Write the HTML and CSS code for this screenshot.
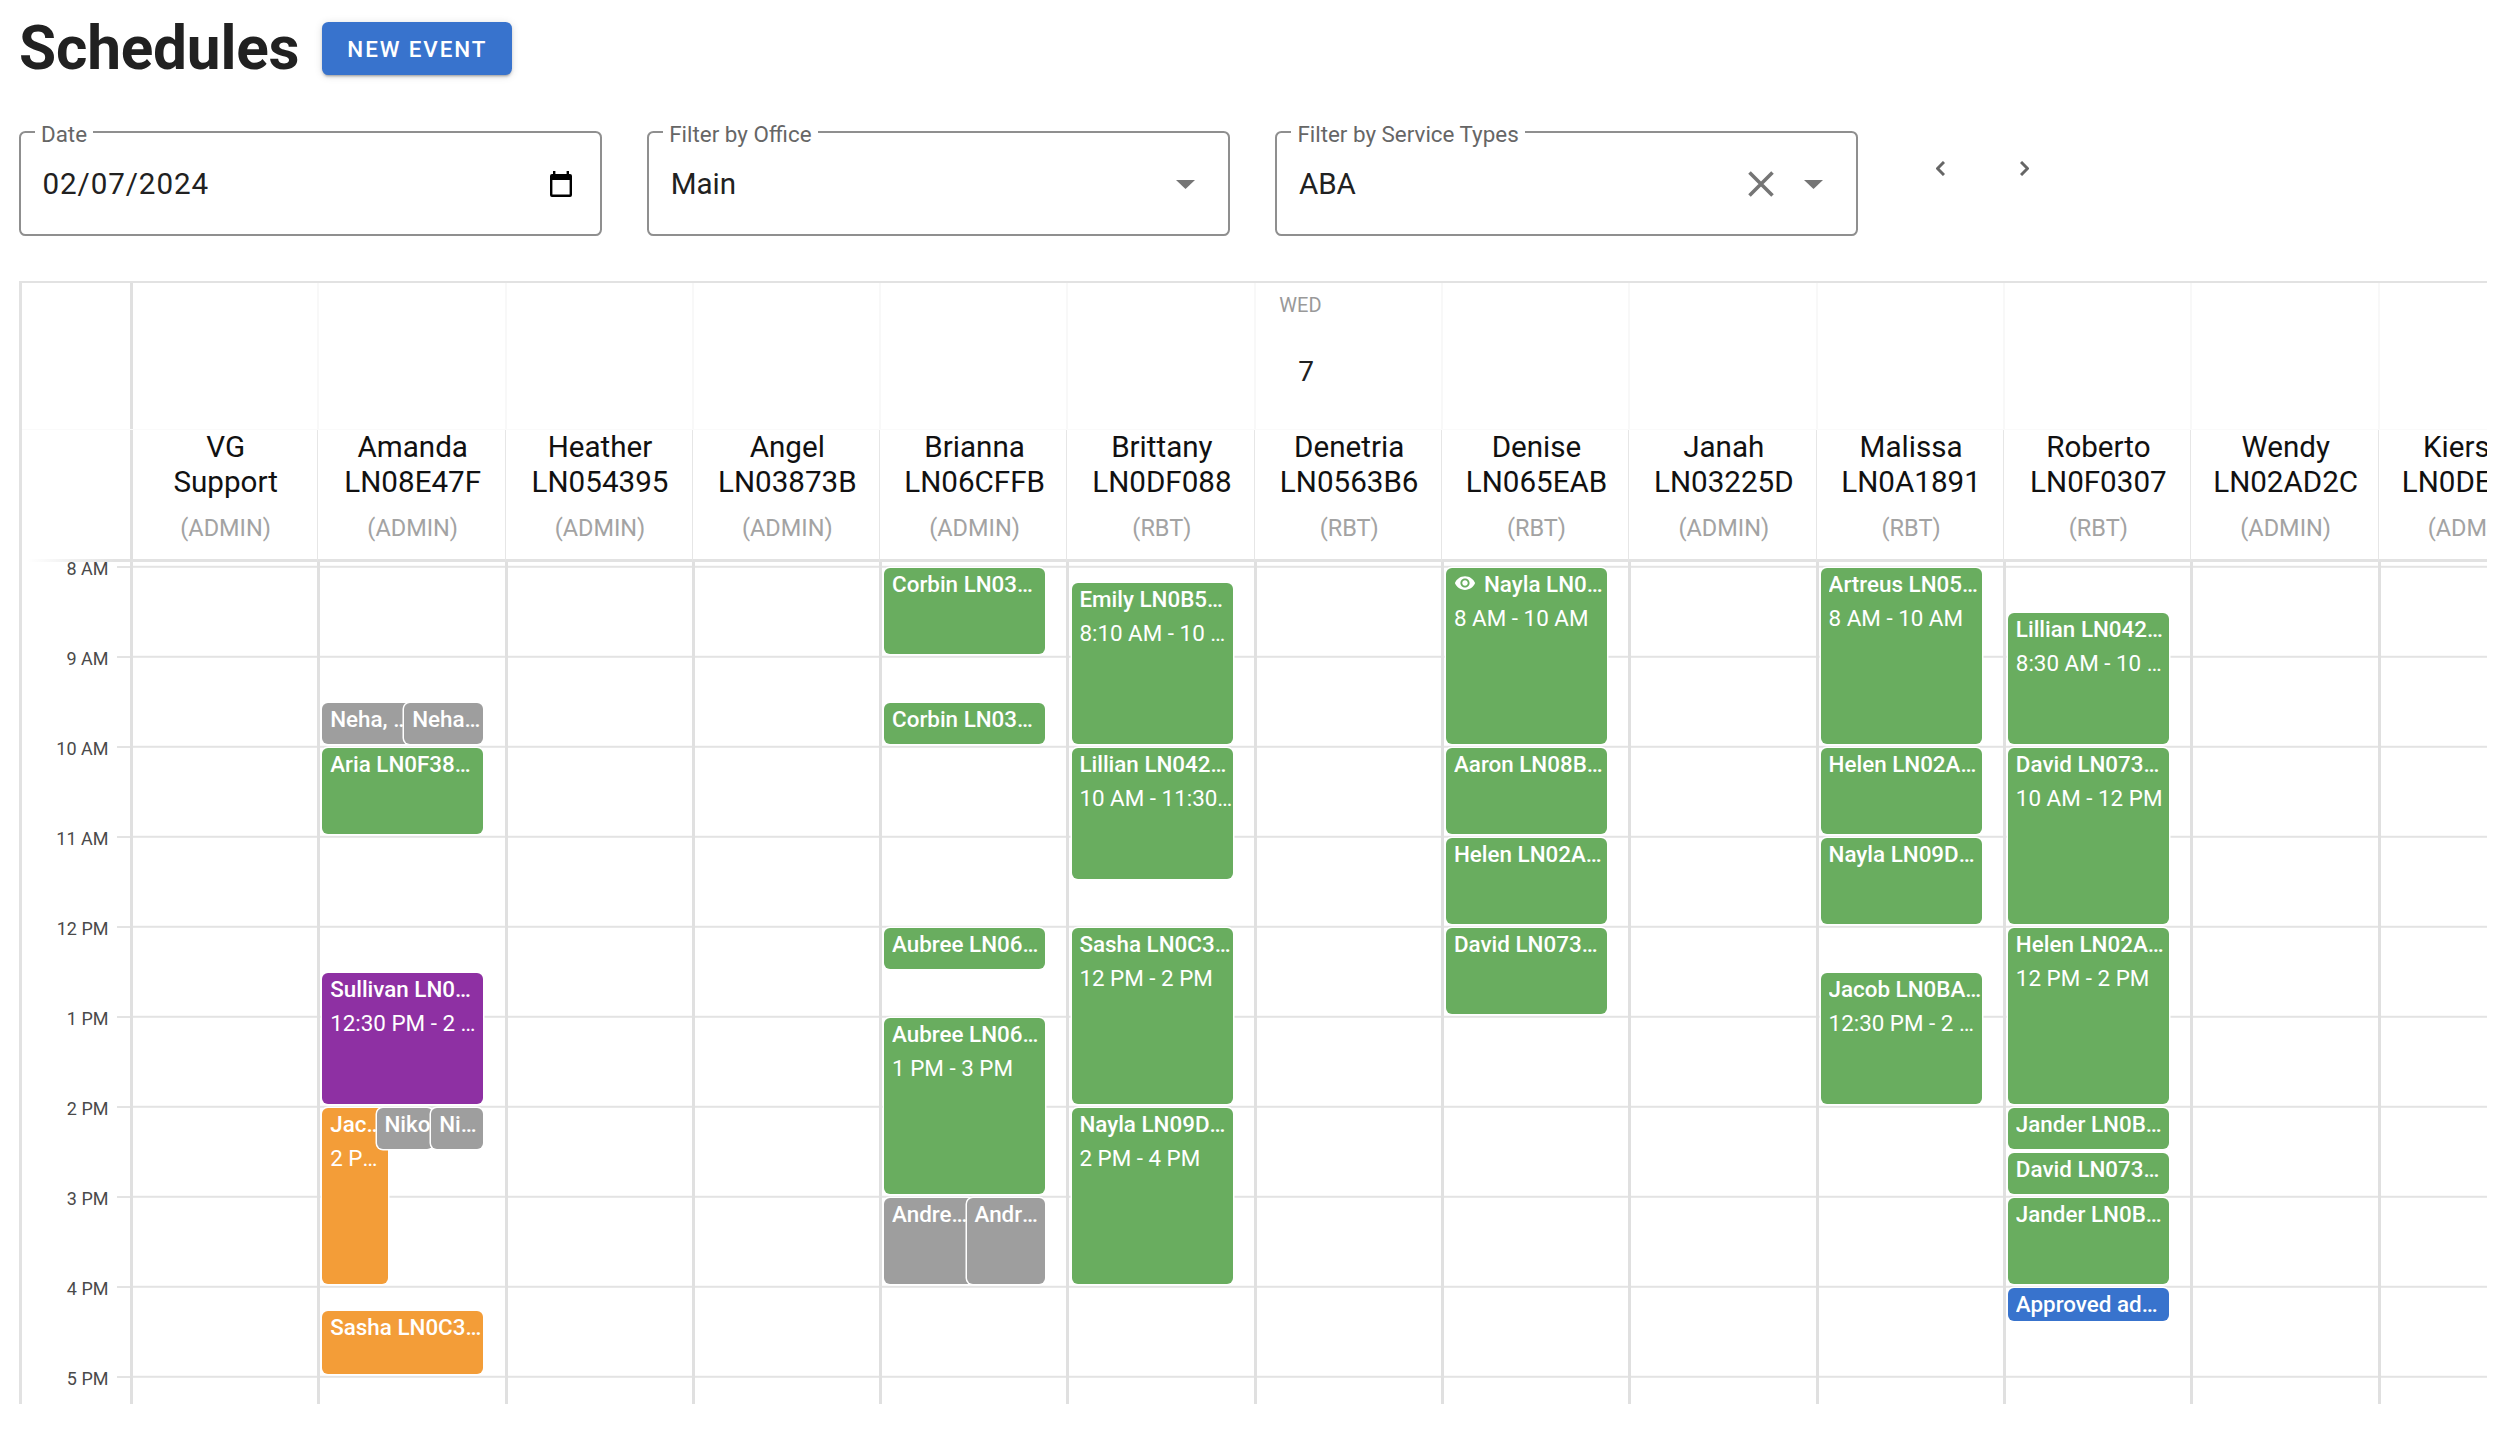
FILE: index.html
```html
<!DOCTYPE html>
<html lang="en">
<head>
<meta charset="utf-8">
<title>Schedules</title>
<link rel="stylesheet" href="styles.css">
</head>
<body>
<main class="page">
  <header class="title-row">
    <h1 class="title">Schedules</h1>
    <button class="new-event">NEW EVENT</button>
  </header>

  <section class="filters">
    <div class="field">
      <span class="field-label">Date</span>
      <span class="field-value field-date">02/07/2024</span>
      <svg class="cal-icon" viewBox="0 0 22 26"><path d="M3 0h2.4v3h11.2V0H19v3h1a2 2 0 0 1 2 2v19a2 2 0 0 1-2 2H2a2 2 0 0 1-2-2V5a2 2 0 0 1 2-2h1zM2.4 9v14.6h17.2V9z"/></svg>
    </div>
    <div class="field">
      <span class="field-label">Filter by Office</span>
      <span class="field-value">Main</span>
      <svg class="arrow-icon" viewBox="0 0 19 9"><path d="M0 0h19L9.5 9z"/></svg>
    </div>
    <div class="field">
      <span class="field-label">Filter by Service Types</span>
      <span class="field-value">ABA</span>
      <svg class="clear-icon" viewBox="0 0 26 26"><path d="M1.5 1.5l23 23M24.5 1.5l-23 23"/></svg>
      <svg class="arrow-icon" viewBox="0 0 19 9"><path d="M0 0h19L9.5 9z"/></svg>
    </div>
    <nav class="pager">
      <svg class="chev" viewBox="0 0 9 15"><path d="M8 1L1.5 7.5 8 14"/></svg>
      <svg class="chev" viewBox="0 0 9 15"><path d="M1 1l6.5 6.5L1 14"/></svg>
    </nav>
  </section>

  <section class="calendar">
    <div class="days">
      <div class="gutter"></div>
      <div class="day"></div><div class="day"></div><div class="day"></div><div class="day"></div><div class="day"></div><div class="day"></div>
      <div class="day day-active"><span class="dow">WED</span><span class="dom">7</span></div>
      <div class="day"></div><div class="day"></div><div class="day"></div><div class="day"></div><div class="day"></div><div class="day"></div>
    </div>

    <div class="names">
      <div class="gutter gutter-names"></div>
      <div class="staff first"><div class="staff-name">VG<br>Support</div><div class="role">(ADMIN)</div></div>
      <div class="staff"><div class="staff-name">Amanda<br>LN08E47F</div><div class="role">(ADMIN)</div></div>
      <div class="staff"><div class="staff-name">Heather<br>LN054395</div><div class="role">(ADMIN)</div></div>
      <div class="staff"><div class="staff-name">Angel<br>LN03873B</div><div class="role">(ADMIN)</div></div>
      <div class="staff"><div class="staff-name">Brianna<br>LN06CFFB</div><div class="role">(ADMIN)</div></div>
      <div class="staff"><div class="staff-name">Brittany<br>LN0DF088</div><div class="role">(RBT)</div></div>
      <div class="staff"><div class="staff-name">Denetria<br>LN0563B6</div><div class="role">(RBT)</div></div>
      <div class="staff"><div class="staff-name">Denise<br>LN065EAB</div><div class="role">(RBT)</div></div>
      <div class="staff"><div class="staff-name">Janah<br>LN03225D</div><div class="role">(ADMIN)</div></div>
      <div class="staff"><div class="staff-name">Malissa<br>LN0A1891</div><div class="role">(RBT)</div></div>
      <div class="staff"><div class="staff-name">Roberto<br>LN0F0307</div><div class="role">(RBT)</div></div>
      <div class="staff"><div class="staff-name">Wendy<br>LN02AD2C</div><div class="role">(ADMIN)</div></div>
      <div class="staff"><div class="staff-name">Kierstin<br>LN0DE1A2</div><div class="role">(ADMIN)</div></div>
    </div>

    <div class="grid-body">
      <div class="times">
        <div class="hour"><span class="hour-label">8 AM</span><i class="tick"></i></div>
        <div class="hour"><span class="hour-label">9 AM</span><i class="tick"></i></div>
        <div class="hour"><span class="hour-label">10 AM</span><i class="tick"></i></div>
        <div class="hour"><span class="hour-label">11 AM</span><i class="tick"></i></div>
        <div class="hour"><span class="hour-label">12 PM</span><i class="tick"></i></div>
        <div class="hour"><span class="hour-label">1 PM</span><i class="tick"></i></div>
        <div class="hour"><span class="hour-label">2 PM</span><i class="tick"></i></div>
        <div class="hour"><span class="hour-label">3 PM</span><i class="tick"></i></div>
        <div class="hour"><span class="hour-label">4 PM</span><i class="tick"></i></div>
        <div class="hour"><span class="hour-label">5 PM</span><i class="tick"></i></div>
      </div>

      <div class="col"></div>

      <div class="col">
        <div class="ev gray" style="top:141px;height:41px;width:92px"><div class="ev-t">Neha, Patel LN0A</div></div>
        <div class="ev gray" style="top:141px;height:41px;left:84.1px;width:79px"><div class="ev-t">Neha, Patel LN0A</div></div>
        <div class="ev green" style="top:186px;height:86px"><div class="ev-t">Aria LN0F38C2A1</div></div>
        <div class="ev purple" style="top:411px;height:131px"><div class="ev-t">Sullivan LN0B7A21</div><div class="ev-d">12:30 PM - 2 PM</div></div>
        <div class="ev orange" style="top:546px;height:176px;width:66px"><div class="ev-t">Jackson LN0A</div><div class="ev-d">2 PM - 4 PM</div></div>
        <div class="ev gray" style="top:546px;height:41px;left:56.3px;width:56px"><div class="ev-t">Niko</div></div>
        <div class="ev gray" style="top:546px;height:41px;left:111.1px;width:52px"><div class="ev-t">Nikola LN0</div></div>
        <div class="ev orange" style="top:748.5px;height:63.5px"><div class="ev-t">Sasha LN0C3D2E1</div></div>
      </div>

      <div class="col"></div>
      <div class="col"></div>

      <div class="col">
        <div class="ev green" style="top:6px;height:86px"><div class="ev-t">Corbin LN03A7B21</div></div>
        <div class="ev green" style="top:141px;height:41px"><div class="ev-t">Corbin LN03A7B21</div></div>
        <div class="ev green" style="top:366px;height:41px"><div class="ev-t">Aubree LN06C1D2</div></div>
        <div class="ev green" style="top:456px;height:176px"><div class="ev-t">Aubree LN06C1D2</div><div class="ev-d">1 PM - 3 PM</div></div>
        <div class="ev gray" style="top:636px;height:86px;width:90px"><div class="ev-t">Andrea LN0</div></div>
        <div class="ev gray" style="top:636px;height:86px;left:84.5px;width:78.6px"><div class="ev-t">Andrea LN0</div></div>
      </div>

      <div class="col">
        <div class="ev green" style="top:21px;height:161px"><div class="ev-t">Emily LN0B5A31C</div><div class="ev-d">8:10 AM - 10 AM</div></div>
        <div class="ev green" style="top:186px;height:131px"><div class="ev-t">Lillian LN042A1B3</div><div class="ev-d">10 AM - 11:30 AM</div></div>
        <div class="ev green" style="top:366px;height:176px"><div class="ev-t">Sasha LN0C3D2E1</div><div class="ev-d">12 PM - 2 PM</div></div>
        <div class="ev green" style="top:546px;height:176px"><div class="ev-t">Nayla LN09D4E2F</div><div class="ev-d">2 PM - 4 PM</div></div>
      </div>

      <div class="col"></div>

      <div class="col">
        <div class="ev green" style="top:6px;height:176px"><div class="ev-t ev-flag"><svg class="eye" viewBox="0 0 24 24"><path d="M12 4.5C7 4.5 2.73 7.61 1 12c1.73 4.39 6 7.5 11 7.5s9.27-3.11 11-7.5c-1.73-4.39-6-7.5-11-7.5zM12 17c-2.76 0-5-2.24-5-5s2.24-5 5-5 5 2.24 5 5-2.24 5-5 5zm0-8c-1.66 0-3 1.34-3 3s1.34 3 3 3 3-1.34 3-3-1.34-3-3-3z"/></svg><span class="ev-flag-text">Nayla LN09D4E2F</span></div><div class="ev-d">8 AM - 10 AM</div></div>
        <div class="ev green" style="top:186px;height:86px"><div class="ev-t">Aaron LN08B2C41</div></div>
        <div class="ev green" style="top:276px;height:86px"><div class="ev-t">Helen LN02A4B1C</div></div>
        <div class="ev green" style="top:366px;height:86px"><div class="ev-t">David LN073C2A1</div></div>
      </div>

      <div class="col"></div>

      <div class="col">
        <div class="ev green" style="top:6px;height:176px"><div class="ev-t">Artreus LN05A1B2C</div><div class="ev-d">8 AM - 10 AM</div></div>
        <div class="ev green" style="top:186px;height:86px"><div class="ev-t">Helen LN02A4B1C</div></div>
        <div class="ev green" style="top:276px;height:86px"><div class="ev-t">Nayla LN09D4E2F</div></div>
        <div class="ev green" style="top:411px;height:131px"><div class="ev-t">Jacob LN0BA1C2D</div><div class="ev-d">12:30 PM - 2 PM</div></div>
      </div>

      <div class="col">
        <div class="ev green" style="top:51px;height:131px"><div class="ev-t">Lillian LN042A1B3</div><div class="ev-d">8:30 AM - 10 AM</div></div>
        <div class="ev green" style="top:186px;height:176px"><div class="ev-t">David LN073C2A1</div><div class="ev-d">10 AM - 12 PM</div></div>
        <div class="ev green" style="top:366px;height:176px"><div class="ev-t">Helen LN02A4B1C</div><div class="ev-d">12 PM - 2 PM</div></div>
        <div class="ev green" style="top:546px;height:41px"><div class="ev-t">Jander LN0B1A2C3</div></div>
        <div class="ev green" style="top:591px;height:41px"><div class="ev-t">David LN073C2A1</div></div>
        <div class="ev green" style="top:636px;height:86px"><div class="ev-t">Jander LN0B1A2C3</div></div>
        <div class="ev blue" style="top:726px;height:33px"><div class="ev-t">Approved admin time</div></div>
      </div>

      <div class="col"></div>
      <div class="col"></div>
    </div>
  </section>
</main>
</body>
</html>
```

FILE: styles.css
```css
* { box-sizing: border-box; }
html, body { margin: 0; height: 100%; background: #fff; overflow: hidden; }
body { font-family: Roboto, "Liberation Sans", sans-serif; color: #212121; }

.page { padding: 16px 13px 0 19px; }

/* title row */
.title-row { display: flex; align-items: center; height: 65px; gap: 22.5px; }
.title { margin: 0; font-size: 60.3px; font-weight: 700; line-height: 65px; color: #212121; letter-spacing: -0.2px; }
.new-event {
  width: 190px; height: 53px; border: 0; border-radius: 6.4px; padding: 0 0 0 1px;
  background: #3873cd; color: #fff; font: 500 22.4px Roboto, sans-serif; letter-spacing: 1.9px;
  box-shadow: 0 3px 2px -2px rgba(0,0,0,.2), 0 2px 3px 0 rgba(0,0,0,.14), 0 1px 8px 0 rgba(0,0,0,.12);
}

/* filters */
.filters { display: flex; margin-top: 50px; gap: 45.7px; }
.field {
  position: relative; display: flex; align-items: center; flex: none;
  width: 582.5px; height: 105px; padding: 0 28px 0 21.5px;
  border: 2px solid #8f8f8f; border-radius: 6.4px;
}
.field-label {
  position: absolute; top: -12.5px; left: 14px; padding: 0 6px;
  background: #fff; color: #666; font-size: 22.4px; line-height: 26px;
}
.field-value { flex: 1; font-size: 29.6px; color: #212121; }
.field-date { letter-spacing: .9px; }
.cal-icon { width: 22px; height: 26px; fill: #000; margin-right: 0; margin-left: -1px; }
.arrow-icon { width: 19px; height: 9px; fill: #757575; margin-right: 5px; margin-top: 1px; }
.clear-icon { width: 26px; height: 26px; fill: none; stroke: #757575; stroke-width: 3.6px; margin-right: 30px; margin-top: 1px; }

.pager { display: flex; gap: 75px; margin-left: 32px; margin-top: 30px; align-self: flex-start; }
.chev { width: 9px; height: 15px; fill: none; stroke: #666; stroke-width: 3px; }

/* calendar */
.calendar {
  height: 1123px; margin-top: 45px; overflow: hidden;
  border-top: 2.5px solid #e2e2e2; border-left: 3px solid #e2e2e2;
}
.gutter { flex: none; width: 108px; }
.days { display: flex; height: 146.5px; border-bottom: 1.6px solid #fafafa; }
.day { flex: none; width: 187.3px; border-left: 2px solid #f8f8f8; position: relative; }
.day:nth-child(2) { border-left: 3px solid #e0e0e0; }
.dow { position: absolute; top: 10px; left: 23.5px; font-size: 20px; line-height: 24px; color: #999; }
.dom { position: absolute; top: 71px; left: 42.5px; font-size: 28px; line-height: 36px; color: #212121; }

.names { display: flex; height: 132.5px; }
.gutter-names { border-bottom: 3px solid; border-image: linear-gradient(90deg, #fff 6%, #e2e2e2 85%) 1; }
.staff {
  flex: none; width: 187.3px; height: 132.5px; text-align: center; padding-left: 2.5px;
  border-left: 1.6px solid #e6e6e6; border-bottom: 3px solid #e2e2e2;
}
.staff.first { border-left: 3px solid #e0e0e0; padding-left: 1px; }
.staff-name { font-size: 29.6px; line-height: 35.5px; color: #111; white-space: nowrap; }
.role { margin-top: 12px; font-size: 23.5px; line-height: 30px; color: #a3a3a3; white-space: nowrap; }

.grid-body { display: flex; height: 841.5px; }
.times { flex: none; width: 108px; padding-top: 3.8px; }
.hour { display: flex; height: 90px; }
.hour-label {
  flex: none; width: 86.5px; height: 24px; margin-top: -8.5px;
  text-align: right; font-size: 18px; line-height: 24px; color: #4a4a4a;
}
.tick { flex: 1; margin-left: 8px; height: 2px; background: #e3e3e3; }

.col {
  position: relative; flex: none; width: 187.3px; height: 100%;
  border-left: 3.2px solid #e0e0e0;
  background: linear-gradient(#e3e3e3 2px, transparent 2px) 0 3.8px / 100% 90px;
}

.ev {
  position: absolute; left: 2.1px; width: 161px; overflow: hidden;
  border-radius: 6px; color: #fff; padding: 0 0 0 7.8px;
  box-shadow: 0 0 0 1.5px #fff;
}
.green { background: #69ad5f; }
.gray { background: #9e9e9e; }
.orange { background: #f39d38; }
.purple { background: #8e30a3; }
.blue { background: #3873cd; }

.ev-t, .ev-d { white-space: nowrap; overflow: hidden; text-overflow: ellipsis; font-size: 22.4px; }
.ev-t { font-weight: 500; line-height: 32px; }
.ev-d { font-weight: 400; line-height: 34px; margin-top: 1px; }
.ev-flag { display: flex; align-items: center; }
.ev-flag-text { overflow: hidden; text-overflow: ellipsis; }
.eye { flex: none; width: 22px; height: 22px; fill: #fff; margin-right: 8px; margin-top: -2px; }
```
